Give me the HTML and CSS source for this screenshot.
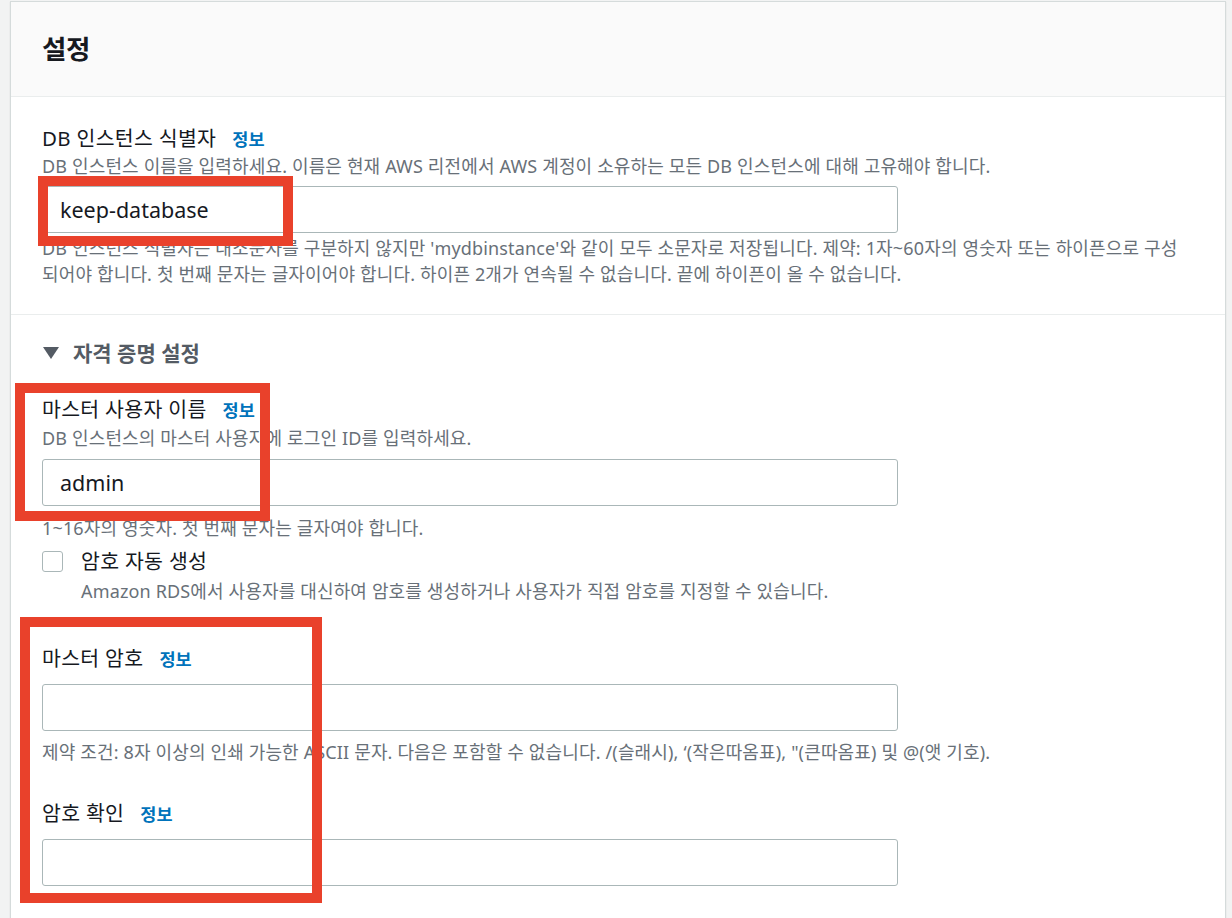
FILE: index.html
```html
<!DOCTYPE html>
<html lang="ko">
<head>
<meta charset="utf-8">
<title>설정</title>
<link rel="stylesheet" href="styles.css">
</head>
<body>
<div class="page">
  <div class="card">
    <div class="card-header">
      <h2 class="title">설정</h2>
    </div>

    <div class="section section-id">
      <div class="label-row">
        <span class="label">DB 인스턴스 식별자</span>
        <a class="info">정보</a>
      </div>
      <div class="desc">DB 인스턴스 이름을 입력하세요. 이름은 현재 AWS 리전에서 AWS 계정이 소유하는 모든 DB 인스턴스에 대해 고유해야 합니다.</div>
      <div class="input input-first">keep-database</div>
      <div class="help help-first">DB 인스턴스 식별자는 대소문자를 구분하지 않지만 'mydbinstance'와 같이 모두 소문자로 저장됩니다. 제약: 1자~60자의 영숫자 또는 하이픈으로 구성되어야 합니다. 첫 번째 문자는 글자이어야 합니다. 하이픈 2개가 연속될 수 없습니다. 끝에 하이픈이 올 수 없습니다.</div>
    </div>

    <div class="section section-cred">
      <div class="expander">
        <svg class="caret" width="16" height="12" viewBox="0 0 16 12"><polygon points="0,0 16,0 8,12" fill="#545b64"/></svg>
        <span>자격 증명 설정</span>
      </div>

      <div class="label-row field-user">
        <span class="label">마스터 사용자 이름</span>
        <a class="info">정보</a>
      </div>
      <div class="desc desc-tight">DB 인스턴스의 마스터 사용자에 로그인 ID를 입력하세요.</div>
      <div class="input input-user">admin</div>
      <div class="help help-user">1~16자의 영숫자. 첫 번째 문자는 글자여야 합니다.</div>

      <div class="checkbox-row">
        <span class="checkbox"></span>
        <div class="checkbox-text">
          <div class="checkbox-label">암호 자동 생성</div>
          <div class="desc checkbox-desc">Amazon RDS에서 사용자를 대신하여 암호를 생성하거나 사용자가 직접 암호를 지정할 수 있습니다.</div>
        </div>
      </div>

      <div class="label-row field-pass">
        <span class="label">마스터 암호</span>
        <a class="info">정보</a>
      </div>
      <div class="input input-pass"></div>
      <div class="help help-pass">제약 조건: 8자 이상의 인쇄 가능한 ASCII 문자. 다음은 포함할 수 없습니다. /(슬래시), ‘(작은따옴표), "(큰따옴표) 및 @(앳 기호).</div>

      <div class="label-row field-confirm">
        <span class="label">암호 확인</span>
        <a class="info">정보</a>
      </div>
      <div class="input input-pass"></div>
    </div>
  </div>

  <div class="mark mark-1"></div>
  <div class="mark mark-2"></div>
  <div class="mark mark-3"></div>
</div>
</body>
</html>
```

FILE: styles.css
```css
* { box-sizing: border-box; }

html, body {
  margin: 0;
  padding: 0;
  background: #f2f3f3;
}

body {
  font-family: "Noto Sans", "Noto Sans CJK KR", sans-serif;
  color: #16191f;
}

.page {
  position: relative;
  padding: 1px 6px 0 10px;
}

.card {
  background: #ffffff;
  border: 1px solid #d5dbdb;
  box-shadow: 0 1px 1px 0 rgba(0, 28, 36, 0.15);
}

.card-header {
  height: 95px;
  background: #fafafa;
  border-bottom: 1px solid #eaeded;
  padding: 0 31px;
  display: flex;
  align-items: center;
}

.title {
  margin: 0;
  font-size: 26.5px;
  font-weight: 700;
  line-height: 30px;
  color: #16191f;
  letter-spacing: -0.3px;
}

.section {
  padding: 0 31px;
}

.section-id {
  padding-top: 27px;
  padding-bottom: 27px;
  border-bottom: 1px solid #eaeded;
}

.section-cred {
  padding-top: 24px;
  padding-bottom: 33px;
}

.label-row {
  display: flex;
  align-items: baseline;
  gap: 16px;
  height: 28px;
  line-height: 28px;
}

.label {
  font-size: 20.5px;
  letter-spacing: 0.3px;
  color: #16191f;
}

.info {
  font-size: 17.5px;
  font-weight: 700;
  color: #0073bb;
}

.desc {
  margin-top: 1px;
  font-size: 18px;
  letter-spacing: 0.15px;
  line-height: 26px;
  color: #687078;
}

.desc-tight { margin-top: 2px; }

.input {
  height: 47px;
  border: 1px solid #aab7b8;
  border-radius: 3px;
  width: 856px;
  padding-left: 17px;
  font-size: 21.5px;
  line-height: 45px;
  color: #16191f;
}

.input-first { margin-top: 7px; }
.input-user { margin-top: 8px; }
.input-pass { margin-top: 12px; }

.help {
  font-size: 18px;
  letter-spacing: 0.15px;
  line-height: 26px;
  color: #687078;
}

.help-first { margin-top: 2px; }
.help-user { margin-top: 9px; }
.help-pass { margin-top: 8px; }

.expander {
  display: flex;
  align-items: center;
  gap: 14px;
  padding-left: 1px;
  height: 28px;
  line-height: 28px;
  font-size: 21px;
  font-weight: 700;
  color: #545b64;
}

.caret { display: block; }

.field-user { margin-top: 28px; }
.field-pass { margin-top: 40px; }
.field-confirm { margin-top: 34px; }

.checkbox-row {
  margin-top: 6px;
  display: flex;
  align-items: flex-start;
  gap: 18px;
}

.checkbox {
  flex: none;
  width: 21px;
  height: 21px;
  margin-top: 4px;
  border: 1.5px solid #aab7b8;
  border-radius: 3px;
  background: #fff;
}

.checkbox-label {
  font-size: 20.5px;
  letter-spacing: 0.3px;
  line-height: 28px;
  color: #16191f;
}

.checkbox-desc { margin-top: 3px; }

.mark {
  position: absolute;
  border: 10px solid #e9412b;
  pointer-events: none;
}

.mark-1 { left: 38px; top: 176px; width: 255px; height: 70px; }
.mark-2 { left: 15px; top: 383px; width: 255px; height: 138px; }
.mark-3 { left: 20px; top: 617px; width: 302px; height: 286px; }
```
